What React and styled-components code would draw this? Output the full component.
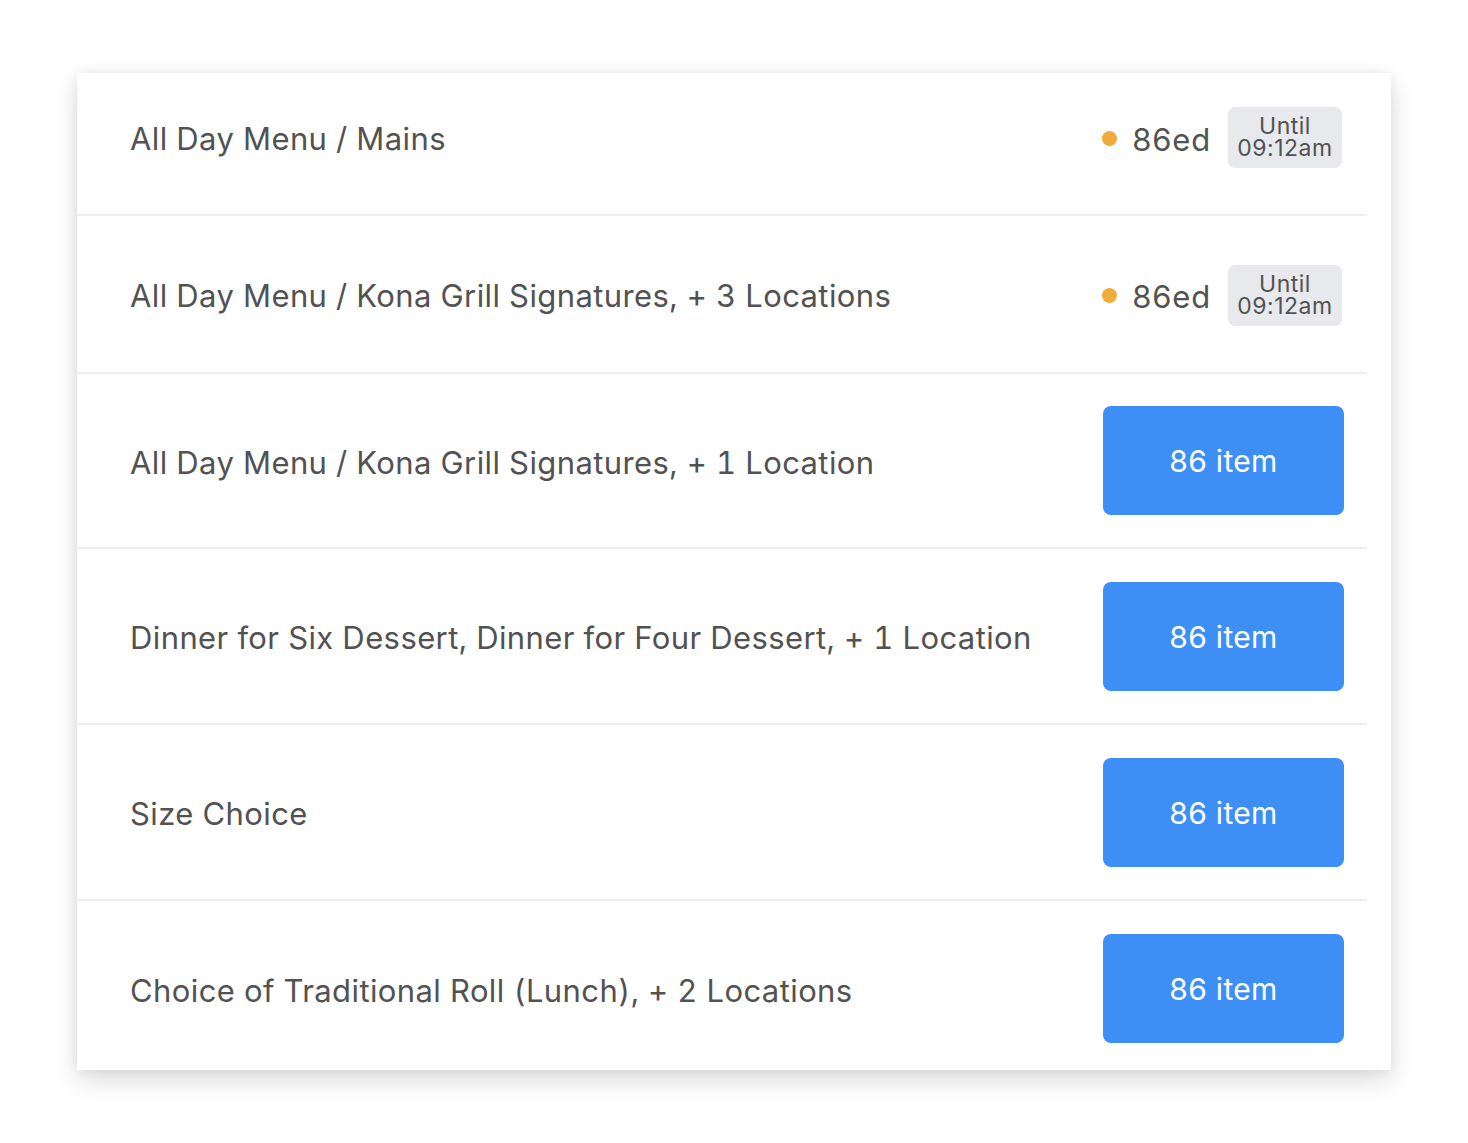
import React from 'react';
import styled, { createGlobalStyle } from 'styled-components';

const GlobalStyle = createGlobalStyle`
  html, body {
    margin: 0;
    padding: 0;
    background: #ffffff;
  }
  body {
    font-family: Inter, "Noto Sans", sans-serif;
    -webkit-font-smoothing: antialiased;
  }
`;

const rows = [
  { label: 'All Day Menu / Mains', status: 'ed', height: 143, offset: -7 },
  { label: 'All Day Menu / Kona Grill Signatures, + 3 Locations', status: 'ed', height: 158 },
  { label: 'All Day Menu / Kona Grill Signatures, + 1 Location', height: 175 },
  { label: 'Dinner for Six Dessert, Dinner for Four Dessert, + 1 Location', height: 176 },
  { label: 'Size Choice', height: 176 },
  { label: 'Choice of Traditional Roll (Lunch), + 2 Locations', height: 169, offset: 3, last: true },
];

export default function App() {
  return (
    <>
      <GlobalStyle />
      <Page>
        <Card>
          {rows.map((row) => (
            <Row key={row.label} height={row.height} last={row.last} offset={row.offset || 0}>
              <Label>{row.label}</Label>
              {row.status === 'ed' ? (
                <Status>
                  <Dot />
                  <StatusText>86ed</StatusText>
                  <Until>
                    Until
                    <br />
                    09:12am
                  </Until>
                </Status>
              ) : (
                <ItemButton type="button">86 item</ItemButton>
              )}
            </Row>
          ))}
        </Card>
      </Page>
    </>
  );
}

const Page = styled.div`
  padding: 73px 77px;
`;

const Card = styled.div`
  width: 1314px;
  background: #ffffff;
  box-shadow: 0 10px 24px rgba(0, 0, 0, 0.14), 0 0 12px rgba(0, 0, 0, 0.06);
  overflow: hidden;
`;

const Row = styled.div`
  display: flex;
  align-items: center;
  justify-content: space-between;
  box-sizing: border-box;
  height: ${(p) => p.height}px;
  margin-right: 24px;
  padding: ${(p) => (p.offset < 0 ? 0 : p.offset * 2)}px 23px ${(p) => (p.offset < 0 ? -p.offset * 2 : 0)}px 53px;
  border-bottom: ${(p) => (p.last ? 'none' : '2px solid #eeeeef')};
`;

const Label = styled.div`
  font-size: 31px;
  font-feature-settings: 'tnum';
  color: #525252;
  letter-spacing: 0.4px;
  padding-top: 3px;
`;

const Status = styled.div`
  display: flex;
  align-items: center;
  margin-right: 2px;
  margin-top: 2px;
`;

const Dot = styled.span`
  width: 15px;
  height: 15px;
  border-radius: 50%;
  background: #f0ab3a;
  margin-right: 15px;
  margin-top: 1px;
`;

const StatusText = styled.span`
  font-size: 31px;
  color: #525252;
  letter-spacing: 0.8px;
  margin-right: 17px;
  padding-top: 3px;
`;

const Until = styled.div`
  width: 114px;
  height: 61px;
  box-sizing: border-box;
  border-radius: 7px;
  background: #e8e9ec;
  color: #525252;
  font-size: 23px;
  line-height: 22px;
  letter-spacing: 0.5px;
  text-align: center;
  padding-top: 8px;
`;

const ItemButton = styled.button`
  width: 241px;
  height: 109px;
  border: none;
  border-radius: 8px;
  background: #3e8ff5;
  color: #ffffff;
  font-family: Inter, "Noto Sans", sans-serif;
  font-size: 30px;
  letter-spacing: 0.3px;
  padding-top: 2px;
  cursor: pointer;
`;
